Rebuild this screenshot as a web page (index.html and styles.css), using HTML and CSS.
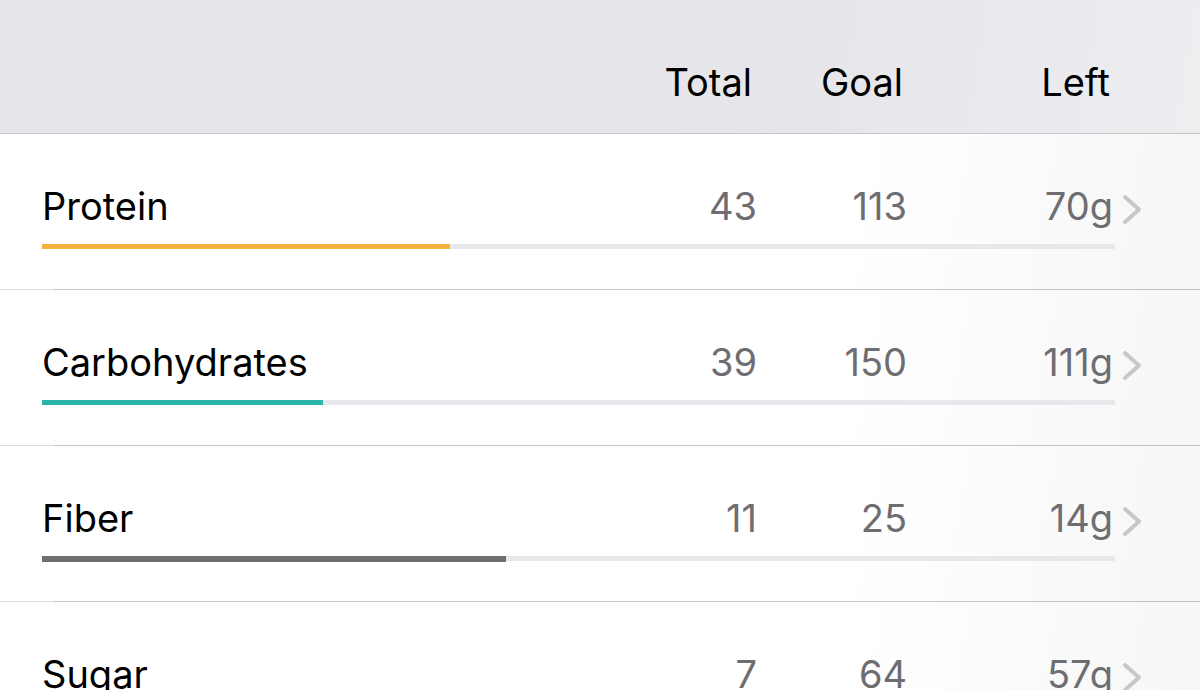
FILE: index.html
```html
<!DOCTYPE html>
<html>
<head>
<meta charset="utf-8">
<link rel="stylesheet" href="styles.css">
</head>
<body>
<div class="screen">
  <div class="header">
    <span class="h-total">Total</span>
    <span class="h-goal">Goal</span>
    <span class="h-left">Left</span>
  </div>
  <div class="row">
    <span class="name">Protein</span>
    <span class="num">43</span>
    <span class="num">113</span>
    <span class="num left">70g</span>
    <svg class="chev" width="20" height="31" viewBox="0 0 20 31"><polyline points="3,3 17,15.5 3,28" fill="none" stroke="#c7c7cc" stroke-width="4" stroke-linecap="round" stroke-linejoin="round"/></svg>
    <div class="bar"><div class="fill protein" style="width:38%"></div></div>
  </div>
  <div class="row">
    <span class="name">Carbohydrates</span>
    <span class="num">39</span>
    <span class="num">150</span>
    <span class="num left">111g</span>
    <svg class="chev" width="20" height="31" viewBox="0 0 20 31"><polyline points="3,3 17,15.5 3,28" fill="none" stroke="#c7c7cc" stroke-width="4" stroke-linecap="round" stroke-linejoin="round"/></svg>
    <div class="bar"><div class="fill carbs" style="width:26.2%"></div></div>
  </div>
  <div class="row">
    <span class="name">Fiber</span>
    <span class="num">11</span>
    <span class="num">25</span>
    <span class="num left">14g</span>
    <svg class="chev" width="20" height="31" viewBox="0 0 20 31"><polyline points="3,3 17,15.5 3,28" fill="none" stroke="#c7c7cc" stroke-width="4" stroke-linecap="round" stroke-linejoin="round"/></svg>
    <div class="bar"><div class="fill fiber" style="width:43.2%"></div></div>
  </div>
  <div class="row">
    <span class="name">Sugar</span>
    <span class="num">7</span>
    <span class="num">64</span>
    <span class="num left">57g</span>
    <svg class="chev" width="20" height="31" viewBox="0 0 20 31"><polyline points="3,3 17,15.5 3,28" fill="none" stroke="#c7c7cc" stroke-width="4" stroke-linecap="round" stroke-linejoin="round"/></svg>
    <div class="bar"><div class="fill sugar" style="width:11%"></div></div>
  </div>
</div>
</body>
</html>
```

FILE: styles.css
```css
html, body {
  margin: 0;
  padding: 0;
  width: 1200px;
  height: 690px;
  overflow: hidden;
  background: #ffffff;
  font-family: Inter, Roboto, "Liberation Sans", sans-serif;
}

.screen {
  display: flex;
  flex-direction: column;
}

.header {
  height: 133px;
  display: grid;
  grid-template-columns: 607px 150px 150px 206px 45px;
  align-items: start;
  background: linear-gradient(100deg, #e4e4ea 0%, #e6e6eb 70%, #eeeef1 100%);
  border-bottom: 1px solid #c6c6c9;
  font-size: 38px;
  color: #000;
}

.header span {
  text-align: right;
  line-height: 46px;
  margin-top: 59px;
}

.h-total { grid-column: 2; padding-right: 5px; }
.h-goal { grid-column: 3; padding-right: 4px; }
.h-left { grid-column: 4; padding-right: 3px; }

.row {
  display: grid;
  grid-template-columns: 565px 150px 150px 206px 45px;
  grid-template-rows: 46px 5px;
  row-gap: 15px;
  align-content: start;
  padding-top: 49px;
  padding-left: 42px;
  box-sizing: border-box;
  height: 156px;
  flex-shrink: 0;
  border-bottom: 1px solid;
  border-image: linear-gradient(to right, #dcdcde 55px, #c4c4c7 55px) 1;
  background: linear-gradient(100deg, #ffffff 0%, #ffffff 70%, #f6f6f6 100%);
}

.name {
  font-size: 38px;
  line-height: 46px;
  color: #000;
  white-space: nowrap;
}

.num {
  font-size: 38px;
  line-height: 46px;
  color: #6d6d72;
  text-align: right;
}

.chev {
  align-self: start;
  margin-top: 11px;
  margin-left: 9px;
}

.bar {
  grid-column: 1 / 5;
  grid-row: 2;
  margin-right: -2px;
  height: 5px;
  background: #e8e8ec;
}

.fill {
  height: 100%;
}

.protein { background: #f6b23f; }
.carbs { background: #2ab5a8; }
.fiber { background: #6e6e70; height: 6px; }
.sugar { background: #e65a8a; }
```
